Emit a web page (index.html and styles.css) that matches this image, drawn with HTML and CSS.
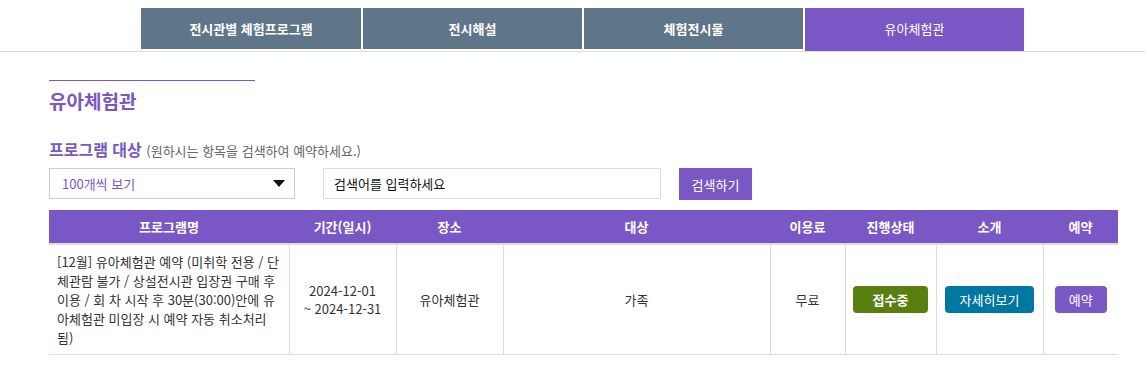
FILE: index.html
```html
<!DOCTYPE html>
<html lang="ko">
<head>
<meta charset="utf-8">
<title>유아체험관</title>
<link rel="stylesheet" href="styles.css">
</head>
<body>
<nav class="tabs">
  <ul class="tab-list">
    <li class="tab tab-first">전시관별 체험프로그램</li>
    <li class="tab">전시해설</li>
    <li class="tab">체험전시물</li>
    <li class="tab tab-active">유아체험관</li>
  </ul>
</nav>
<main class="content">
  <div class="title-line"></div>
  <h1 class="page-title">유아체험관</h1>
  <h2 class="section-title">프로그램 대상 <span class="section-note">(원하시는 항목을 검색하여 예약하세요.)</span></h2>
  <div class="search-row">
    <div class="select-box"><span class="select-text">100개씩 보기</span><span class="select-arrow"></span></div>
    <div class="search-input">검색어를 입력하세요</div>
    <div class="search-btn">검색하기</div>
  </div>
  <table class="program-table">
    <colgroup>
      <col class="c-name"><col class="c-date"><col class="c-place"><col class="c-target">
      <col class="c-fee"><col class="c-status"><col class="c-intro"><col class="c-book">
    </colgroup>
    <thead>
      <tr>
        <th>프로그램명</th><th>기간(일시)</th><th>장소</th><th>대상</th>
        <th>이용료</th><th>진행상태</th><th>소개</th><th>예약</th>
      </tr>
    </thead>
    <tbody>
      <tr>
        <td class="cell-name">[12월] 유아체험관 예약 (미취학 전용 / 단체관람 불가 / 상설전시관 입장권 구매 후 이용 / 회 차 시작 후 30분(30:00)안에 유아체험관 미입장 시 예약 자동 취소처리 됨)</td>
        <td class="cell-date">2024-12-01<br>~ 2024-12-31</td>
        <td>유아체험관</td>
        <td>가족</td>
        <td>무료</td>
        <td><span class="badge badge-status">접수중</span></td>
        <td><span class="badge badge-intro">자세히보기</span></td>
        <td><span class="badge badge-book">예약</span></td>
      </tr>
    </tbody>
  </table>
</main>
</body>
</html>
```
FILE: styles.css
```css
* { box-sizing: border-box; }
body {
  margin: 0;
  font-family: "Noto Sans CJK KR", "Noto Sans", sans-serif;
  font-feature-settings: "palt";
  font-size: 13px;
  color: #333;
  background: #fff;
}
.tabs {
  margin-top: 8px;
  border-bottom: 1px solid #ddd;
}
.tab-list {
  list-style: none;
  margin: 0;
  padding: 0 0 0 141px;
  display: flex;
  gap: 2px;
  height: 43px;
  align-items: flex-start;
}
.tab {
  width: 219px;
  height: 41px;
  background: #5f7589;
  color: #fff;
  font-weight: bold;
  font-size: 13px;
  display: flex;
  align-items: center;
  justify-content: center;
}
.tab-first { width: 220px; }
.tab-active {
  height: 43px;
  padding-bottom: 2px;
  background: #7957c5;
  font-weight: normal;
}
.content {
  width: 1069px;
  margin-left: 49px;
  padding-top: 28px;
}
.title-line {
  width: 206px;
  border-top: 1px solid #7957c5;
}
.page-title {
  margin: 5px 0 0;
  font-size: 19px;
  line-height: 30px;
  font-weight: bold;
  color: #7957c5;
}
.section-title {
  margin: 21px 0 0;
  font-size: 16px;
  line-height: 24px;
  font-weight: bold;
  color: #7957c5;
}
.section-note {
  font-size: 13px;
  font-weight: normal;
  color: #666;
}
.search-row {
  margin-top: 5px;
  display: flex;
  align-items: flex-start;
  height: 32px;
}
.select-box {
  width: 246px;
  height: 31px;
  border: 1px solid #ccc;
  display: flex;
  align-items: center;
  justify-content: space-between;
  padding: 0 9px 0 12px;
}
.select-text { color: #7957c5; }
.select-arrow {
  width: 0;
  height: 0;
  border-left: 6px solid transparent;
  border-right: 6px solid transparent;
  border-top: 7px solid #111;
}
.search-input {
  margin-left: 28px;
  width: 338px;
  height: 31px;
  border: 1px solid #ddd;
  display: flex;
  align-items: center;
  padding-left: 10px;
  color: #111;
}
.search-btn {
  margin-left: 18px;
  width: 73px;
  height: 32px;
  background: #7957c5;
  color: #fff;
  display: flex;
  align-items: center;
  justify-content: center;
}
.program-table {
  margin-top: 10px;
  width: 1069px;
  border-collapse: collapse;
  table-layout: fixed;
}
.c-name { width: 240px; }
.c-date { width: 107px; }
.c-place { width: 107px; }
.c-target { width: 267px; }
.c-fee { width: 75px; }
.c-status { width: 91px; }
.c-intro { width: 107px; }
.c-book { width: 75px; }
.program-table th {
  height: 34px;
  background: #7957c5;
  color: #fff;
  font-weight: bold;
  font-size: 13px;
  border-bottom: 2px solid #ddd;
  padding: 0 0 1px;
  text-align: center;
}
.program-table td {
  text-align: center;
  vertical-align: middle;
  border-bottom: 1px solid #ddd;
  border-left: 1px solid #ddd;
  line-height: 19px;
  padding: 0;
  color: #333;
}
.program-table td:first-child { border-left: none; }
.program-table td.cell-name {
  text-align: left;
  padding: 7px 8px 7px;
}
.program-table td.cell-date { line-height: 18px; }
.badge {
  display: inline-block;
  height: 27px;
  line-height: 27px;
  border-radius: 4px;
  color: #fff;
  text-align: center;
  vertical-align: middle;
}
.badge-status { width: 75px; background: #59800f; font-weight: bold; }
.badge-intro { width: 89px; background: #0077a0; }
.badge-book { width: 52px; background: #7957c5; }
```
